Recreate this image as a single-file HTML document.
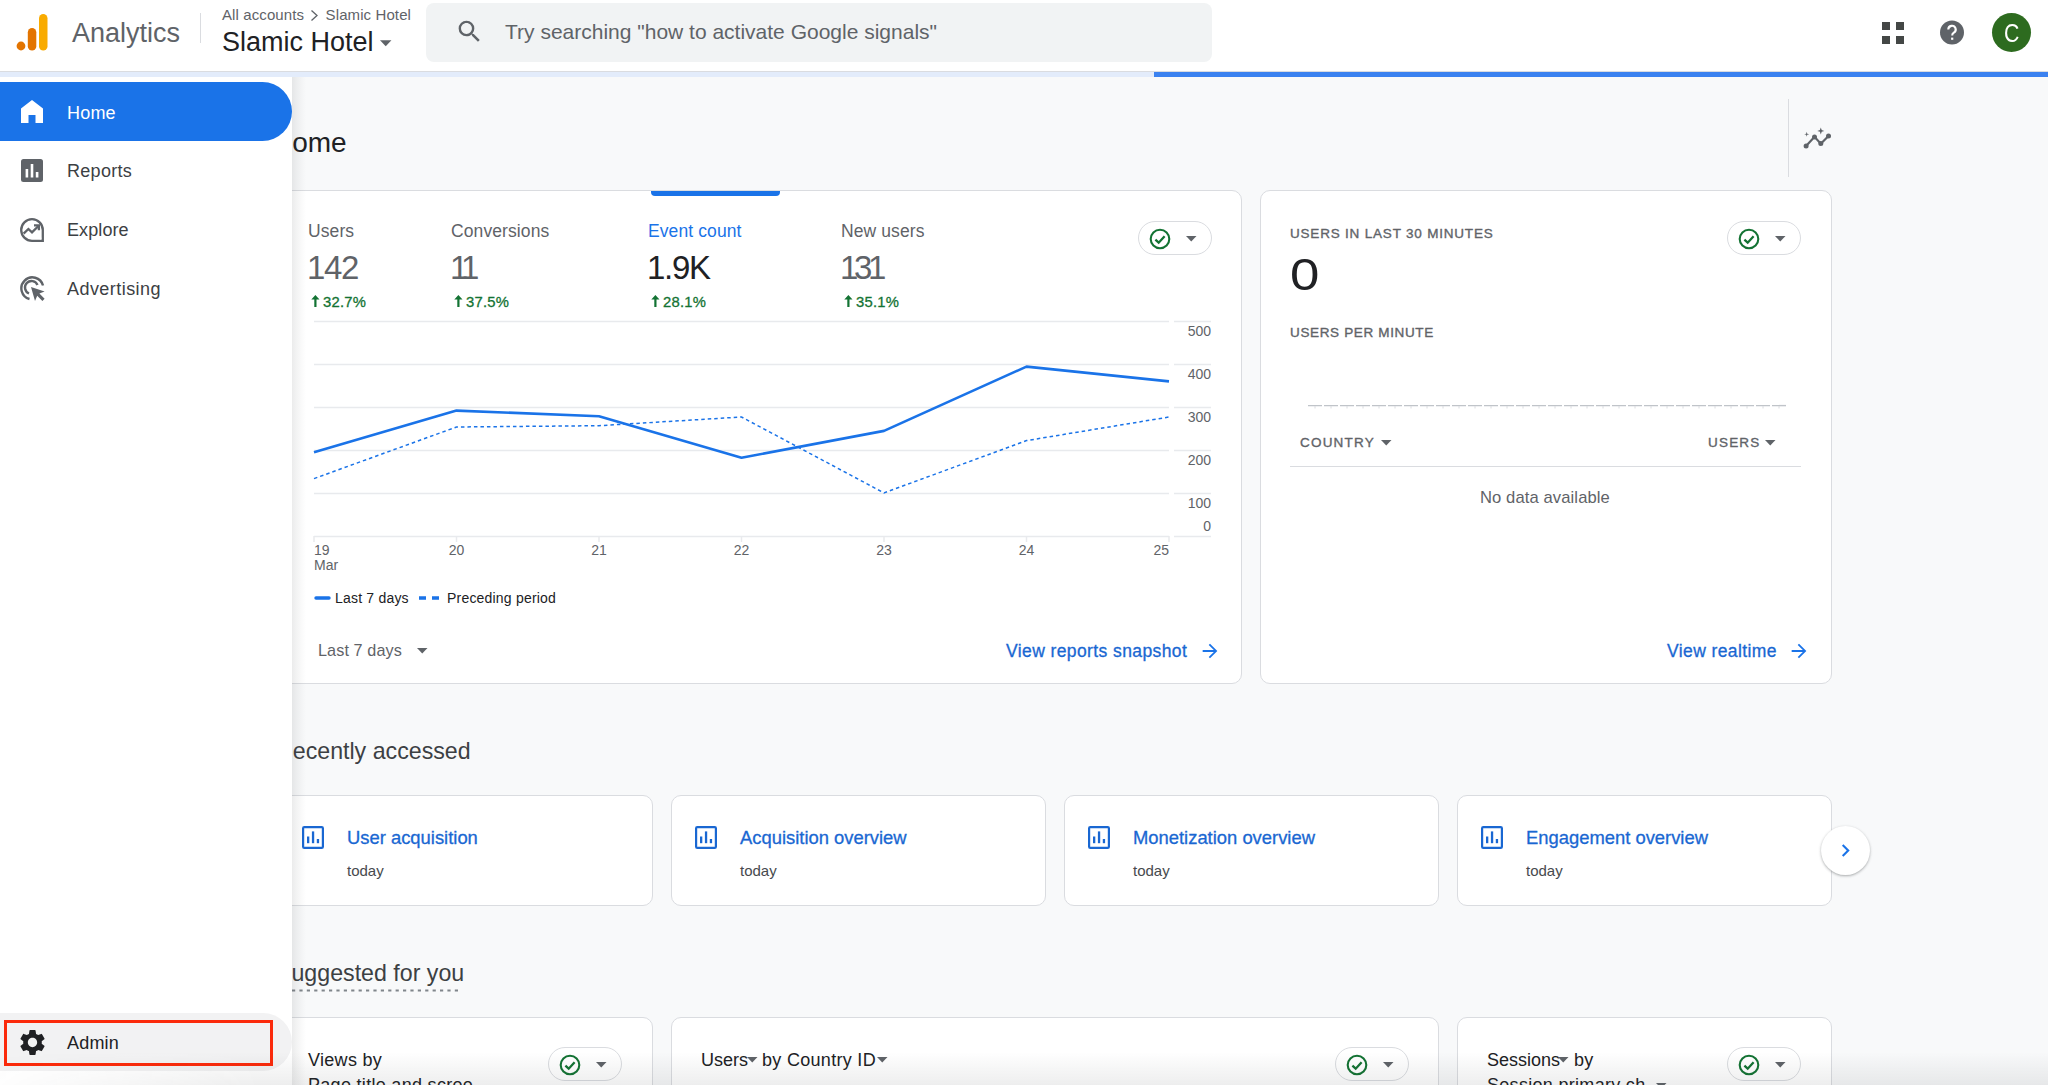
<!DOCTYPE html>
<html><head><meta charset="utf-8">
<style>
*{box-sizing:border-box;margin:0;padding:0}
html,body{width:2048px;height:1085px;overflow:hidden;background:#f8f9fa;font-family:"Liberation Sans",sans-serif;color:#202124}
.abs{position:absolute}
#hdr{position:absolute;left:0;top:0;width:2048px;height:72px;background:#fff;border-bottom:1px solid #dadce0}
#prog{position:absolute;left:0;top:72px;width:2048px;height:5px;background:#e3ecfb}
#prog .bar{position:absolute;left:1154px;top:0;width:894px;height:5px;background:#3b82f0}
#main{position:absolute;left:0;top:0;width:2048px;height:1085px;background:#f8f9fa;overflow:hidden}
#side{position:absolute;left:0;top:77px;width:292px;height:1008px;background:#fff}
.card{position:absolute;background:#fff;border:1px solid #dadce0;border-radius:10px}
.t{position:absolute;white-space:nowrap;line-height:1}
</style></head><body>
<div id="main">
<div class="t" style="left:272px;top:128.5px;font-size:28px;color:#202124;">Home</div>
<div class="abs" style="left:1788px;top:99px;width:1px;height:78px;background:#dadce0"></div>
<svg class="abs" style="left:1802px;top:126px" width="30" height="24" viewBox="0 0 30 24"><path d="M4.1 20.1L12.5 10.8 18.8 17.7 26.5 10" fill="none" stroke="#5f6368" stroke-width="2.2"/><circle cx="4.1" cy="20.1" r="2.5" fill="#5f6368"/><circle cx="12.5" cy="11" r="2.5" fill="#5f6368"/><circle cx="18.8" cy="17.5" r="2.5" fill="#5f6368"/><circle cx="26.5" cy="10" r="2.5" fill="#5f6368"/><path d="M18.8 1.4l.9 2.6 2.6.9-2.6.9-.9 2.6-.9-2.6-2.6-.9 2.6-.9z" fill="#5f6368"/><path d="M4.7 5.8l.55 1.95 1.95.55-1.95.55-.55 1.95-.55-1.95-1.95-.55 1.95-.55z" fill="#5f6368"/></svg>
<div class="card" style="left:200px;top:190px;width:1042px;height:494px"></div>
<div class="abs" style="left:651px;top:191px;width:129px;height:5px;background:#1a73e8;border-radius:0 0 4px 4px"></div>
<div class="t" style="left:308px;top:223px;font-size:17.5px;color:#5f6368;letter-spacing:.1px">Users</div>
<div class="t" style="left:307px;top:251px;font-size:33px;color:#5f6368;letter-spacing:-1.3px">142</div>
<svg class="abs" style="left:310.5px;top:295px" width="9" height="12" viewBox="0 0 9 12"><path d="M4.4 0L0.3 4.4H3.3V12H5.5V4.4H8.5z" fill="#137333"/></svg><div class="t" style="left:323px;top:295px;font-size:14.8px;color:#137333;letter-spacing:.25px;-webkit-text-stroke:.3px #137333">32.7%</div>
<div class="t" style="left:451px;top:223px;font-size:17.5px;color:#5f6368;letter-spacing:.1px">Conversions</div>
<div class="t" style="left:450px;top:251px;font-size:33px;color:#5f6368;letter-spacing:-5px">11</div>
<svg class="abs" style="left:453.5px;top:295px" width="9" height="12" viewBox="0 0 9 12"><path d="M4.4 0L0.3 4.4H3.3V12H5.5V4.4H8.5z" fill="#137333"/></svg><div class="t" style="left:466px;top:295px;font-size:14.8px;color:#137333;letter-spacing:.25px;-webkit-text-stroke:.3px #137333">37.5%</div>
<div class="t" style="left:648px;top:223px;font-size:17.5px;color:#1a73e8;letter-spacing:.1px">Event count</div>
<div class="t" style="left:647px;top:251px;font-size:33px;color:#202124;letter-spacing:-1.3px">1.9K</div>
<svg class="abs" style="left:650.5px;top:295px" width="9" height="12" viewBox="0 0 9 12"><path d="M4.4 0L0.3 4.4H3.3V12H5.5V4.4H8.5z" fill="#137333"/></svg><div class="t" style="left:663px;top:295px;font-size:14.8px;color:#137333;letter-spacing:.25px;-webkit-text-stroke:.3px #137333">28.1%</div>
<div class="t" style="left:841px;top:223px;font-size:17.5px;color:#5f6368;letter-spacing:.1px">New users</div>
<div class="t" style="left:840px;top:251px;font-size:33px;color:#5f6368;letter-spacing:-4.4px">131</div>
<svg class="abs" style="left:843.5px;top:295px" width="9" height="12" viewBox="0 0 9 12"><path d="M4.4 0L0.3 4.4H3.3V12H5.5V4.4H8.5z" fill="#137333"/></svg><div class="t" style="left:856px;top:295px;font-size:14.8px;color:#137333;letter-spacing:.25px;-webkit-text-stroke:.3px #137333">35.1%</div>
<div class="abs" style="left:1138px;top:221px;width:74px;height:34px;border:1px solid #dadce0;border-radius:17px;background:#fff"><svg class="abs" style="left:10px;top:6px" width="22" height="22" viewBox="0 0 22 22"><circle cx="11" cy="11" r="9.3" fill="none" stroke="#137333" stroke-width="2.1"/><path d="M6.4 11.6l3.3 3.1 5.9-6.4" fill="none" stroke="#137333" stroke-width="2.3"/></svg><svg class="abs" style="left:47px;top:14px" width="11" height="6" viewBox="0 0 11 6"><path d="M0 0h10.5L5.25 5.5z" fill="#5f6368"/></svg></div>
<svg class="abs" style="left:0;top:0" width="1250" height="700" viewBox="0 0 1250 700" font-family="Liberation Sans" font-size="14" fill="#5f6368">
<g stroke="#e8eaed" stroke-width="1.5"><line x1="314" y1="321.5" x2="1169" y2="321.5"/><line x1="1174" y1="321.5" x2="1211" y2="321.5"/><line x1="314" y1="364.5" x2="1169" y2="364.5"/><line x1="1174" y1="364.5" x2="1211" y2="364.5"/><line x1="314" y1="407.5" x2="1169" y2="407.5"/><line x1="1174" y1="407.5" x2="1211" y2="407.5"/><line x1="314" y1="450.5" x2="1169" y2="450.5"/><line x1="1174" y1="450.5" x2="1211" y2="450.5"/><line x1="314" y1="493.5" x2="1169" y2="493.5"/><line x1="1174" y1="493.5" x2="1211" y2="493.5"/><line x1="314" y1="536.5" x2="1169" y2="536.5"/><line x1="1174" y1="536.5" x2="1211" y2="536.5"/><line x1="314" y1="536" x2="314" y2="542"/><line x1="456.5" y1="536" x2="456.5" y2="542"/><line x1="599" y1="536" x2="599" y2="542"/><line x1="741.5" y1="536" x2="741.5" y2="542"/><line x1="884" y1="536" x2="884" y2="542"/><line x1="1026.5" y1="536" x2="1026.5" y2="542"/><line x1="1169" y1="536" x2="1169" y2="542"/></g>
<text x="1211" y="336" text-anchor="end">500</text><text x="1211" y="379" text-anchor="end">400</text><text x="1211" y="422" text-anchor="end">300</text><text x="1211" y="465" text-anchor="end">200</text><text x="1211" y="508" text-anchor="end">100</text><text x="1211" y="531" text-anchor="end">0</text>
<text x="314" y="555">19</text><text x="314" y="570">Mar</text><text x="456.5" y="555" text-anchor="middle">20</text><text x="599" y="555" text-anchor="middle">21</text><text x="741.5" y="555" text-anchor="middle">22</text><text x="884" y="555" text-anchor="middle">23</text><text x="1026.5" y="555" text-anchor="middle">24</text><text x="1169" y="555" text-anchor="end">25</text>
<polyline points="314.0,478.6 456.5,427.0 599.0,425.7 741.5,417.0 884.0,492.9 1026.5,440.6 1169.0,417.0" fill="none" stroke="#1a73e8" stroke-width="1.5" stroke-dasharray="3.5,3"/>
<polyline points="314.0,452.3 456.5,410.6 599.0,416.3 741.5,457.7 884.0,430.9 1026.5,366.6 1169.0,381.4" fill="none" stroke="#1a73e8" stroke-width="2.6" stroke-linejoin="round"/>
<line x1="316" y1="598" x2="329" y2="598" stroke="#1a73e8" stroke-width="3.4" stroke-linecap="round"/>
<line x1="419" y1="598" x2="440" y2="598" stroke="#1a73e8" stroke-width="3.6" stroke-dasharray="7,6"/>
<text x="335" y="603" fill="#202124" letter-spacing=".2">Last 7 days</text><text x="447" y="603" fill="#202124" letter-spacing=".2">Preceding period</text>
</svg>
<div class="t" style="left:318px;top:642px;font-size:16.2px;color:#5f6368;letter-spacing:.1px">Last 7 days</div>
<svg class="abs" style="left:417px;top:648px" width="11" height="6" viewBox="0 0 11 6"><path d="M0 0h10.5L5.25 5.5z" fill="#5f6368"/></svg>
<div class="t" style="left:1006px;top:643px;font-size:17.5px;color:#1967d2;letter-spacing:.4px;-webkit-text-stroke:.3px #1967d2">View reports snapshot</div>
<svg class="abs" style="left:1199px;top:640px" width="22" height="22" viewBox="0 0 24 24"><path d="M12 4l-1.41 1.41L16.17 11H4v2h12.17l-5.58 5.59L12 20l8-8z" fill="#1a73e8"/></svg>
<div class="card" style="left:1260px;top:190px;width:572px;height:494px"></div>
<div class="t" style="left:1290px;top:226.5px;font-size:13.5px;color:#5f6368;letter-spacing:.8px;-webkit-text-stroke:.35px #5f6368">USERS IN LAST 30 MINUTES</div>
<div class="t" style="left:1290px;top:252.5px;font-size:44px;color:#202124;transform:scaleX(1.2);transform-origin:0 0">0</div>
<div class="abs" style="left:1727px;top:221px;width:74px;height:34px;border:1px solid #dadce0;border-radius:17px;background:#fff"><svg class="abs" style="left:10px;top:6px" width="22" height="22" viewBox="0 0 22 22"><circle cx="11" cy="11" r="9.3" fill="none" stroke="#137333" stroke-width="2.1"/><path d="M6.4 11.6l3.3 3.1 5.9-6.4" fill="none" stroke="#137333" stroke-width="2.3"/></svg><svg class="abs" style="left:47px;top:14px" width="11" height="6" viewBox="0 0 11 6"><path d="M0 0h10.5L5.25 5.5z" fill="#5f6368"/></svg></div>
<div class="t" style="left:1290px;top:325.5px;font-size:13.5px;color:#5f6368;letter-spacing:.65px;-webkit-text-stroke:.35px #5f6368">USERS PER MINUTE</div>
<svg class="abs" style="left:1308px;top:403px" width="478" height="7"><line x1="0" y1="2.6" x2="478" y2="2.6" stroke="#c0c4c9" stroke-width="1.4" stroke-dasharray="14,2"/><line x1="7" y1="3" x2="7" y2="5.5" stroke="#dadce0" stroke-width="1"/><line x1="23" y1="3" x2="23" y2="5.5" stroke="#dadce0" stroke-width="1"/><line x1="39" y1="3" x2="39" y2="5.5" stroke="#dadce0" stroke-width="1"/><line x1="55" y1="3" x2="55" y2="5.5" stroke="#dadce0" stroke-width="1"/><line x1="71" y1="3" x2="71" y2="5.5" stroke="#dadce0" stroke-width="1"/><line x1="87" y1="3" x2="87" y2="5.5" stroke="#dadce0" stroke-width="1"/><line x1="103" y1="3" x2="103" y2="5.5" stroke="#dadce0" stroke-width="1"/><line x1="119" y1="3" x2="119" y2="5.5" stroke="#dadce0" stroke-width="1"/><line x1="135" y1="3" x2="135" y2="5.5" stroke="#dadce0" stroke-width="1"/><line x1="151" y1="3" x2="151" y2="5.5" stroke="#dadce0" stroke-width="1"/><line x1="167" y1="3" x2="167" y2="5.5" stroke="#dadce0" stroke-width="1"/><line x1="183" y1="3" x2="183" y2="5.5" stroke="#dadce0" stroke-width="1"/><line x1="199" y1="3" x2="199" y2="5.5" stroke="#dadce0" stroke-width="1"/><line x1="215" y1="3" x2="215" y2="5.5" stroke="#dadce0" stroke-width="1"/><line x1="231" y1="3" x2="231" y2="5.5" stroke="#dadce0" stroke-width="1"/><line x1="247" y1="3" x2="247" y2="5.5" stroke="#dadce0" stroke-width="1"/><line x1="263" y1="3" x2="263" y2="5.5" stroke="#dadce0" stroke-width="1"/><line x1="279" y1="3" x2="279" y2="5.5" stroke="#dadce0" stroke-width="1"/><line x1="295" y1="3" x2="295" y2="5.5" stroke="#dadce0" stroke-width="1"/><line x1="311" y1="3" x2="311" y2="5.5" stroke="#dadce0" stroke-width="1"/><line x1="327" y1="3" x2="327" y2="5.5" stroke="#dadce0" stroke-width="1"/><line x1="343" y1="3" x2="343" y2="5.5" stroke="#dadce0" stroke-width="1"/><line x1="359" y1="3" x2="359" y2="5.5" stroke="#dadce0" stroke-width="1"/><line x1="375" y1="3" x2="375" y2="5.5" stroke="#dadce0" stroke-width="1"/><line x1="391" y1="3" x2="391" y2="5.5" stroke="#dadce0" stroke-width="1"/><line x1="407" y1="3" x2="407" y2="5.5" stroke="#dadce0" stroke-width="1"/><line x1="423" y1="3" x2="423" y2="5.5" stroke="#dadce0" stroke-width="1"/><line x1="439" y1="3" x2="439" y2="5.5" stroke="#dadce0" stroke-width="1"/><line x1="455" y1="3" x2="455" y2="5.5" stroke="#dadce0" stroke-width="1"/><line x1="471" y1="3" x2="471" y2="5.5" stroke="#dadce0" stroke-width="1"/></svg>
<div class="t" style="left:1300px;top:435.5px;font-size:13.5px;color:#5f6368;letter-spacing:1.2px;-webkit-text-stroke:.35px #5f6368">COUNTRY</div>
<svg class="abs" style="left:1381px;top:440px" width="11" height="6" viewBox="0 0 11 6"><path d="M0 0h10.5L5.25 5.5z" fill="#5f6368"/></svg>
<div class="t" style="left:1708px;top:435.5px;font-size:13.5px;color:#5f6368;letter-spacing:1.2px;-webkit-text-stroke:.35px #5f6368">USERS</div>
<svg class="abs" style="left:1765px;top:440px" width="11" height="6" viewBox="0 0 11 6"><path d="M0 0h10.5L5.25 5.5z" fill="#5f6368"/></svg>
<div class="abs" style="left:1290px;top:466px;width:511px;height:1px;background:#dadce0"></div>
<div class="t" style="left:1480px;top:490px;font-size:16.6px;color:#5f6368;letter-spacing:.1px">No data available</div>
<div class="t" style="left:1667px;top:643px;font-size:17.5px;color:#1967d2;letter-spacing:.4px;-webkit-text-stroke:.3px #1967d2">View realtime</div>
<svg class="abs" style="left:1788px;top:640px" width="22" height="22" viewBox="0 0 24 24"><path d="M12 4l-1.41 1.41L16.17 11H4v2h12.17l-5.58 5.59L12 20l8-8z" fill="#1a73e8"/></svg>
<div class="t" style="left:276px;top:740px;font-size:23.2px;color:#3c4043;">Recently accessed</div>
<div class="card" style="left:278px;top:795px;width:375px;height:111px"></div>
<svg class="abs" style="left:302px;top:826px" width="23" height="23" viewBox="0 0 23 23"><rect x="1.1" y="1.1" width="19.8" height="20.8" rx="1.2" fill="none" stroke="#1967d2" stroke-width="2.2"/><rect x="5" y="10.5" width="2.3" height="6.7" fill="#1967d2"/><rect x="9.9" y="5.4" width="2.3" height="11.8" fill="#1967d2"/><rect x="14.8" y="13" width="2.3" height="4.2" fill="#1967d2"/></svg>
<div class="t" style="left:347px;top:829px;font-size:18.4px;color:#1967d2;letter-spacing:0;-webkit-text-stroke:.3px #1967d2">User acquisition</div>
<div class="t" style="left:347px;top:863px;font-size:15px;color:#474a4e;">today</div>
<div class="card" style="left:671px;top:795px;width:375px;height:111px"></div>
<svg class="abs" style="left:695px;top:826px" width="23" height="23" viewBox="0 0 23 23"><rect x="1.1" y="1.1" width="19.8" height="20.8" rx="1.2" fill="none" stroke="#1967d2" stroke-width="2.2"/><rect x="5" y="10.5" width="2.3" height="6.7" fill="#1967d2"/><rect x="9.9" y="5.4" width="2.3" height="11.8" fill="#1967d2"/><rect x="14.8" y="13" width="2.3" height="4.2" fill="#1967d2"/></svg>
<div class="t" style="left:740px;top:829px;font-size:18.4px;color:#1967d2;letter-spacing:0;-webkit-text-stroke:.3px #1967d2">Acquisition overview</div>
<div class="t" style="left:740px;top:863px;font-size:15px;color:#474a4e;">today</div>
<div class="card" style="left:1064px;top:795px;width:375px;height:111px"></div>
<svg class="abs" style="left:1088px;top:826px" width="23" height="23" viewBox="0 0 23 23"><rect x="1.1" y="1.1" width="19.8" height="20.8" rx="1.2" fill="none" stroke="#1967d2" stroke-width="2.2"/><rect x="5" y="10.5" width="2.3" height="6.7" fill="#1967d2"/><rect x="9.9" y="5.4" width="2.3" height="11.8" fill="#1967d2"/><rect x="14.8" y="13" width="2.3" height="4.2" fill="#1967d2"/></svg>
<div class="t" style="left:1133px;top:829px;font-size:18.4px;color:#1967d2;letter-spacing:0;-webkit-text-stroke:.3px #1967d2">Monetization overview</div>
<div class="t" style="left:1133px;top:863px;font-size:15px;color:#474a4e;">today</div>
<div class="card" style="left:1457px;top:795px;width:375px;height:111px"></div>
<svg class="abs" style="left:1481px;top:826px" width="23" height="23" viewBox="0 0 23 23"><rect x="1.1" y="1.1" width="19.8" height="20.8" rx="1.2" fill="none" stroke="#1967d2" stroke-width="2.2"/><rect x="5" y="10.5" width="2.3" height="6.7" fill="#1967d2"/><rect x="9.9" y="5.4" width="2.3" height="11.8" fill="#1967d2"/><rect x="14.8" y="13" width="2.3" height="4.2" fill="#1967d2"/></svg>
<div class="t" style="left:1526px;top:829px;font-size:18.4px;color:#1967d2;letter-spacing:0;-webkit-text-stroke:.3px #1967d2">Engagement overview</div>
<div class="t" style="left:1526px;top:863px;font-size:15px;color:#474a4e;">today</div>
<div class="abs" style="left:1821px;top:826px;width:49px;height:49px;border-radius:50%;background:#fff;box-shadow:0 1px 3px rgba(60,64,67,.3),0 1px 2px rgba(60,64,67,.15)"><svg class="abs" style="left:12px;top:12px" width="25" height="25" viewBox="0 0 24 24"><path d="M8.59 16.59L13.17 12 8.59 7.41 10 6l6 6-6 6z" fill="#1a73e8"/></svg></div>
<div class="t" style="left:276px;top:962px;font-size:23.2px;color:#3c4043;">Suggested for you</div>
<svg class="abs" style="left:292px;top:989px" width="170" height="3"><line x1="0" y1="1.5" x2="168" y2="1.5" stroke="#80868b" stroke-width="2" stroke-dasharray="3.2,4.2"/></svg>
<div class="card" style="left:200px;top:1017px;width:453px;height:200px"></div>
<div class="t" style="left:308px;top:1051px;font-size:18px;color:#202124;letter-spacing:.3px">Views by</div>
<div class="t" style="left:308px;top:1076px;font-size:18px;color:#202124;letter-spacing:.3px">Page title and scree</div>
<div class="abs" style="left:548px;top:1047px;width:74px;height:34px;border:1px solid #dadce0;border-radius:17px;background:#fff"><svg class="abs" style="left:10px;top:6px" width="22" height="22" viewBox="0 0 22 22"><circle cx="11" cy="11" r="9.3" fill="none" stroke="#137333" stroke-width="2.1"/><path d="M6.4 11.6l3.3 3.1 5.9-6.4" fill="none" stroke="#137333" stroke-width="2.3"/></svg><svg class="abs" style="left:47px;top:14px" width="11" height="6" viewBox="0 0 11 6"><path d="M0 0h10.5L5.25 5.5z" fill="#5f6368"/></svg></div>
<div class="card" style="left:671px;top:1017px;width:768px;height:200px"></div>
<div class="t" style="left:701px;top:1051px;font-size:18px;color:#202124;">Users</div>
<svg class="abs" style="left:747px;top:1057px" width="11" height="6" viewBox="0 0 11 6"><path d="M0 0h10.5L5.25 5.5z" fill="#5f6368"/></svg>
<div class="t" style="left:762px;top:1051px;font-size:18px;color:#202124;letter-spacing:.3px">by Country ID</div>
<svg class="abs" style="left:877px;top:1057px" width="11" height="6" viewBox="0 0 11 6"><path d="M0 0h10.5L5.25 5.5z" fill="#5f6368"/></svg>
<div class="abs" style="left:1335px;top:1047px;width:74px;height:34px;border:1px solid #dadce0;border-radius:17px;background:#fff"><svg class="abs" style="left:10px;top:6px" width="22" height="22" viewBox="0 0 22 22"><circle cx="11" cy="11" r="9.3" fill="none" stroke="#137333" stroke-width="2.1"/><path d="M6.4 11.6l3.3 3.1 5.9-6.4" fill="none" stroke="#137333" stroke-width="2.3"/></svg><svg class="abs" style="left:47px;top:14px" width="11" height="6" viewBox="0 0 11 6"><path d="M0 0h10.5L5.25 5.5z" fill="#5f6368"/></svg></div>
<div class="card" style="left:1457px;top:1017px;width:375px;height:200px"></div>
<div class="t" style="left:1487px;top:1051px;font-size:18px;color:#202124;">Sessions</div>
<svg class="abs" style="left:1558px;top:1057px" width="11" height="6" viewBox="0 0 11 6"><path d="M0 0h10.5L5.25 5.5z" fill="#5f6368"/></svg>
<div class="t" style="left:1574px;top:1051px;font-size:18px;color:#202124;letter-spacing:.3px">by</div>
<div class="t" style="left:1487px;top:1076px;font-size:18px;color:#202124;letter-spacing:.3px">Session primary ch</div>
<svg class="abs" style="left:1656px;top:1083px" width="11" height="6" viewBox="0 0 11 6"><path d="M0 0h10.5L5.25 5.5z" fill="#5f6368"/></svg>
<div class="abs" style="left:1727px;top:1047px;width:74px;height:34px;border:1px solid #dadce0;border-radius:17px;background:#fff"><svg class="abs" style="left:10px;top:6px" width="22" height="22" viewBox="0 0 22 22"><circle cx="11" cy="11" r="9.3" fill="none" stroke="#137333" stroke-width="2.1"/><path d="M6.4 11.6l3.3 3.1 5.9-6.4" fill="none" stroke="#137333" stroke-width="2.3"/></svg><svg class="abs" style="left:47px;top:14px" width="11" height="6" viewBox="0 0 11 6"><path d="M0 0h10.5L5.25 5.5z" fill="#5f6368"/></svg></div>
</div>
<div id="hdr">
<svg class="abs" style="left:14px;top:12px" width="38" height="42" viewBox="0 0 38 42">
<rect x="25" y="2" width="8.5" height="36.5" rx="4.25" fill="#f9ab00"/>
<rect x="13.8" y="16" width="8.5" height="22.5" rx="4.25" fill="#e37400"/>
<circle cx="7" cy="34" r="4.4" fill="#e37400"/>
</svg>
<div class="t" style="left:72px;top:20px;font-size:27px;color:#5f6368;">Analytics</div>
<div class="abs" style="left:200px;top:13px;width:1px;height:30px;background:#dadce0"></div>
<div class="t" style="left:222px;top:7px;font-size:15px;color:#5f6368;letter-spacing:.1px">All accounts <svg width="11" height="13" viewBox="0 0 11 13" style="vertical-align:-2px;margin:0 1px"><path d="M2.5 1.5l5.5 5-5.5 5" fill="none" stroke="#5f6368" stroke-width="1.3"/></svg> Slamic Hotel</div>
<div class="t" style="left:222px;top:29px;font-size:27px;color:#202124;">Slamic Hotel</div>
<svg class="abs" style="left:380px;top:40px" width="12" height="7" viewBox="0 0 11 6"><path d="M0 0h10.5L5.25 5.5z" fill="#5f6368"/></svg>
<div class="abs" style="left:426px;top:3px;width:786px;height:59px;background:#f1f3f4;border-radius:8px"></div>
<svg class="abs" style="left:455px;top:17px" width="29" height="29" viewBox="0 0 24 24"><path d="M15.5 14h-.79l-.28-.27A6.47 6.47 0 0 0 16 9.5 6.5 6.5 0 1 0 9.5 16c1.61 0 3.09-.59 4.23-1.57l.27.28v.79l5 4.99L20.49 19l-4.99-5zm-6 0C7.01 14 5 11.99 5 9.5S7.01 5 9.5 5 14 7.01 14 9.5 11.99 14 9.5 14z" fill="#5f6368"/></svg>
<div class="t" style="left:505px;top:21px;font-size:21px;color:#5f6368;">Try searching "how to activate Google signals"</div>
<svg class="abs" style="left:1882px;top:22px" width="23" height="23" viewBox="0 0 23 23" fill="#444746"><rect x="0" y="0" width="8" height="8"/><rect x="14" y="0" width="8" height="8"/><rect x="0" y="14" width="8" height="8"/><rect x="14" y="14" width="8" height="8"/></svg>
<svg class="abs" style="left:1940px;top:20px" width="24" height="25" viewBox="0 0 24 25"><circle cx="12" cy="12.5" r="12" fill="#5f6368"/><path d="M8.3 9.6a3.7 3.7 0 1 1 5.6 3.1c-1.1.7-1.7 1.3-1.7 2.8" fill="none" stroke="#fff" stroke-width="2.1"/><rect x="11.1" y="17.6" width="2.2" height="2.2" fill="#fff"/></svg>
<div class="abs" style="left:1992px;top:13px;width:39px;height:39px;border-radius:50%;background:#2d6b1f"></div>
<div class="t" style="left:2004px;top:21px;font-size:25px;color:#fff;transform:scaleX(.85);transform-origin:0 0">C</div>
</div>
<div id="prog"><div class="bar"></div></div>
<div id="side">
<div class="abs" style="left:0;top:5px;width:292px;height:59px;background:#1a73e8;border-radius:0 30px 30px 0"></div>
<svg class="abs" style="left:21px;top:23px" width="22" height="23" viewBox="0 0 22 23"><path d="M11 0L0 8.5V23h7.5v-8h7v8H22V8.5z" fill="#fff"/></svg>
<div class="t" style="left:67px;top:27px;font-size:18px;color:#fff;letter-spacing:.2px">Home</div>
<svg class="abs" style="left:21px;top:82px" width="22" height="23" viewBox="0 0 22 23"><rect x="0" y="0" width="22" height="23" rx="2.5" fill="#5f6368"/><rect x="4.6" y="10" width="2.6" height="8.5" fill="#fff"/><rect x="9.7" y="5" width="2.6" height="13.5" fill="#fff"/><rect x="14.8" y="13" width="2.6" height="5.5" fill="#fff"/></svg>
<div class="t" style="left:67px;top:85px;font-size:18px;color:#3c4043;letter-spacing:.3px">Reports</div>
<svg class="abs" style="left:19px;top:140px" width="26" height="26" viewBox="0 0 26 26"><path d="M23.8 13A10.8 10.8 0 1 0 13 23.8H23.8z" fill="none" stroke="#5f6368" stroke-width="2.3" stroke-linejoin="miter"/><path d="M4.6 16.6l4.8-4.6 3.6 3.4 6.2-6.2" fill="none" stroke="#5f6368" stroke-width="2.3"/><path d="M15 8.4h4.9v4.9" fill="none" stroke="#5f6368" stroke-width="2.3"/><circle cx="21.3" cy="21.3" r="1.1" fill="#fff"/></svg>
<div class="t" style="left:67px;top:144px;font-size:18px;color:#3c4043;letter-spacing:.1px">Explore</div>
<svg class="abs" style="left:20px;top:199px" width="27" height="27" viewBox="0 0 27 27"><path d="M23 9.5A11 11 0 1 0 9.5 23" fill="none" stroke="#5f6368" stroke-width="2.4"/><path d="M17.5 9A6.5 6.5 0 1 0 9 17.5" fill="none" stroke="#5f6368" stroke-width="2.4"/><path d="M11 11l4 14 2.2-5.2 5.2 5.2 2.2-2.2-5.2-5.2 5.2-2.2z" fill="#5f6368"/></svg>
<div class="t" style="left:67px;top:203px;font-size:18px;color:#3c4043;letter-spacing:.45px">Advertising</div>
<div class="abs" style="left:0;top:936px;width:292px;height:58px;background:#f2f2f3;border-radius:0 29px 29px 0"></div>
<div class="abs" style="left:4px;top:943px;width:269px;height:46px;border:3px solid #fb2a0b"></div>
<svg class="abs" style="left:17px;top:950px" width="31" height="31" viewBox="0 0 24 24"><path d="M19.14 12.94c.04-.3.06-.61.06-.94 0-.32-.02-.64-.07-.94l2.03-1.58a.49.49 0 0 0 .12-.61l-1.92-3.32a.488.488 0 0 0-.59-.22l-2.39.96c-.5-.38-1.03-.7-1.62-.94l-.36-2.54a.484.484 0 0 0-.48-.41h-3.840c-.24 0-.43.17-.47.41l-.36 2.54c-.59.24-1.13.57-1.62.94l-2.39-.96c-.22-.08-.47 0-.59.22L2.74 8.87c-.12.21-.08.47.12.61l2.030 1.58c-.05.3-.09.63-.09.94s.02.64.07.94l-2.03 1.58a.49.49 0 0 0-.12.61l1.92 3.32c.12.22.37.29.59.22l2.39-.96c.5.38 1.03.7 1.62.94l.36 2.54c.05.24.24.41.48.41h3.84c.24 0 .44-.17.47-.41l.36-2.54c.59-.24 1.13-.56 1.62-.94l2.39.96c.22.08.47 0 .59-.22l1.92-3.32c.12-.22.07-.47-.12-.61l-2.01-1.58zM12 15.6c-1.98 0-3.6-1.62-3.6-3.6s1.62-3.6 3.6-3.6 3.6 1.62 3.6 3.6-1.62 3.6-3.6 3.6z" fill="#202124"/></svg>
<div class="t" style="left:67px;top:957px;font-size:18px;color:#202124;letter-spacing:.2px">Admin</div>
</div>
<div class="abs" style="left:292px;top:77px;width:15px;height:1008px;background:linear-gradient(to right,rgba(60,64,67,.1),rgba(60,64,67,.065) 4px,rgba(60,64,67,.025) 10px,rgba(60,64,67,0) 14px)"></div>
<div class="abs" style="left:0;top:1052px;width:2048px;height:33px;background:linear-gradient(rgba(60,64,67,0),rgba(60,64,67,.09));-webkit-mask-image:linear-gradient(to right,rgba(0,0,0,.1),#000 260px)"></div>
</body></html>
